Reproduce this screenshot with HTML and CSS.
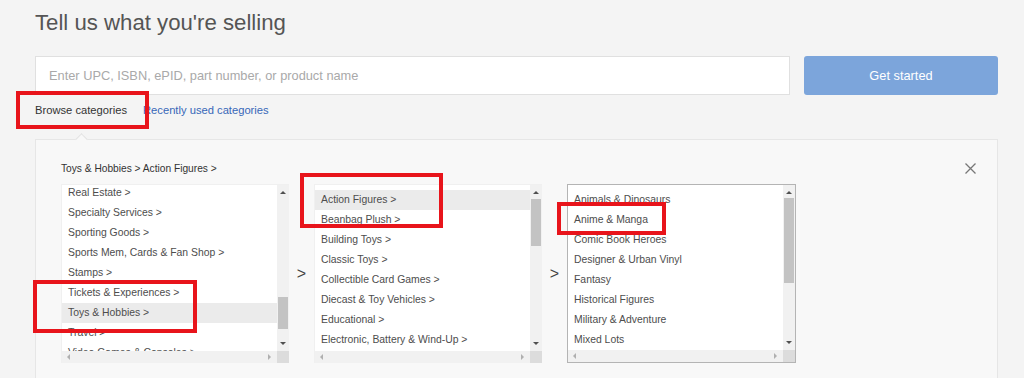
FILE: index.html
```html
<!DOCTYPE html>
<html lang="en">
<head>
    <meta charset="UTF-8">
    <title>Tell us what you're selling</title>
    <link rel="stylesheet" href="styles.css">
</head>
<body>
    <div class="page">
        <h1 class="title">Tell us what you're selling</h1>

        <div class="search">
            <input class="search-input" type="text" placeholder="Enter UPC, ISBN, ePID, part number, or product name">
            <button class="search-btn" type="button">Get started</button>
        </div>

        <div class="tabs">
            <span class="tab tab-active">Browse categories</span>
            <a class="tab tab-link" href="#">Recently used categories</a>
        </div>

        <div class="panel">
            <span class="notch"></span>
            <div class="panel-head">
                <span class="crumbs">Toys &amp; Hobbies &gt; Action Figures &gt;</span>
                <svg class="close" width="11" height="11" viewBox="0 0 11 11">
                    <path d="M0.5 0.5 L10.5 10.5 M10.5 0.5 L0.5 10.5" stroke="#777" stroke-width="1.3" fill="none"/>
                </svg>
            </div>

            <div class="columns">
                <div class="list">
                    <div class="view">
                        <ul class="rows rows-up">
                            <li>Real Estate &gt;</li>
                            <li>Specialty Services &gt;</li>
                            <li>Sporting Goods &gt;</li>
                            <li>Sports Mem, Cards &amp; Fan Shop &gt;</li>
                            <li>Stamps &gt;</li>
                            <li>Tickets &amp; Experiences &gt;</li>
                            <li class="picked">Toys &amp; Hobbies &gt;</li>
                            <li>Travel &gt;</li>
                            <li>Video Games &amp; Consoles &gt;</li>
                        </ul>
                    </div>
                    <div class="vbar">
                        <span class="arr arr-up"></span>
                        <span class="thumb" style="top: 112px; height: 32px;"></span>
                        <span class="arr arr-down"></span>
                    </div>
                    <div class="hbar">
                        <span class="arr arr-left"></span>
                        <span class="arr arr-right"></span>
                    </div>
                    <div class="corner"></div>
                </div>

                <div class="sep">&gt;</div>

                <div class="list">
                    <div class="view">
                        <ul class="rows">
                            <li class="picked">Action Figures &gt;</li>
                            <li>Beanbag Plush &gt;</li>
                            <li>Building Toys &gt;</li>
                            <li>Classic Toys &gt;</li>
                            <li>Collectible Card Games &gt;</li>
                            <li>Diecast &amp; Toy Vehicles &gt;</li>
                            <li>Educational &gt;</li>
                            <li>Electronic, Battery &amp; Wind-Up &gt;</li>
                        </ul>
                    </div>
                    <div class="vbar">
                        <span class="arr arr-up"></span>
                        <span class="thumb" style="top: 14px; height: 47px;"></span>
                        <span class="arr arr-down"></span>
                    </div>
                    <div class="hbar">
                        <span class="arr arr-left"></span>
                        <span class="arr arr-right"></span>
                    </div>
                    <div class="corner"></div>
                </div>

                <div class="sep">&gt;</div>

                <div class="list list-focus">
                    <div class="view">
                        <ul class="rows">
                            <li>Animals &amp; Dinosaurs</li>
                            <li>Anime &amp; Manga</li>
                            <li>Comic Book Heroes</li>
                            <li>Designer &amp; Urban Vinyl</li>
                            <li>Fantasy</li>
                            <li>Historical Figures</li>
                            <li>Military &amp; Adventure</li>
                            <li>Mixed Lots</li>
                        </ul>
                    </div>
                    <div class="vbar">
                        <span class="arr arr-up"></span>
                        <span class="thumb" style="top: 13px; height: 85px;"></span>
                        <span class="arr arr-down"></span>
                    </div>
                    <div class="hbar">
                        <span class="arr arr-left"></span>
                        <span class="arr arr-right"></span>
                    </div>
                    <div class="corner"></div>
                </div>
            </div>
        </div>
    </div>

    <!-- red annotation boxes drawn over the screenshot -->
    <div class="mark" style="left: 16px; top: 91px; width: 133px; height: 38px;"></div>
    <div class="mark" style="left: 33px; top: 280px; width: 164px; height: 53px;"></div>
    <div class="mark" style="left: 300px; top: 173px; width: 143px; height: 55px;"></div>
    <div class="mark" style="left: 557px; top: 202px; width: 109px; height: 33px;"></div>
</body>
</html>
```

FILE: styles.css
```css
body {
    font-family: "Liberation Sans", Arial, sans-serif;
    background-color: #f4f4f4;
    color: #333;
    margin: 0;
    padding: 0;
    overflow: hidden;
}

.page {
    padding-left: 35px;
    width: 963px;
}

.title {
    margin: 0;
    padding-top: 10px;
    font-size: 22.2px;
    line-height: 26px;
    font-weight: normal;
    color: #555;
}

.search {
    display: flex;
    gap: 14px;
    margin-top: 20px;
}

.search-input {
    width: 755px;
    height: 39px;
    box-sizing: border-box;
    border: 1px solid #e0e0e0;
    padding: 0 13px;
    font-family: inherit;
    font-size: 12.8px;
    background: #fff;
    outline: none;
}

.search-input::placeholder {
    color: #a9a9a9;
}

.search-btn {
    width: 194px;
    height: 39px;
    border: none;
    border-radius: 3px;
    background-color: #7ca5db;
    color: #fff;
    font-family: inherit;
    font-size: 12.8px;
}

.tabs {
    display: flex;
    gap: 16px;
    height: 44px;
    box-sizing: border-box;
    padding-top: 8px;
    font-size: 11.2px;
    line-height: 14px;
}

.tab-active {
    color: #333;
}

.tab-link {
    color: #3767b8;
    text-decoration: none;
}

.panel {
    position: relative;
    background-color: #f8f8f8;
    border: 1px solid #e6e6e6;
    padding: 21px 21px 40px 25px;
}

.notch {
    position: absolute;
    left: 41px;
    top: -5px;
    width: 8px;
    height: 8px;
    background: #f8f8f8;
    border-left: 1px solid #e2e2e2;
    border-top: 1px solid #e2e2e2;
    transform: rotate(45deg);
}

.panel-head {
    display: flex;
    justify-content: space-between;
    align-items: center;
    height: 14px;
    font-size: 10.2px;
    color: #333;
}

.columns {
    display: flex;
    margin-top: 9px;
}

.list {
    display: grid;
    grid-template-columns: 1fr 12px;
    grid-template-rows: 166px 12px;
    width: 228px;
    box-sizing: border-box;
    border: 1px solid #f0f0f0;
    border-right: none;
    border-bottom: none;
    background: #fff;
}

.list-focus {
    width: 229px;
    border: 1px solid #b4b4b4;
    grid-template-rows: 165px 12px;
}

.view {
    overflow: hidden;
}

.rows {
    list-style: none;
    margin: 0;
    padding: 5px 0 0;
    font-size: 10.4px;
    color: #4d4d4d;
}

.rows-up {
    padding-top: 0;
    margin-top: -2px;
}

.rows li {
    height: 20px;
    line-height: 20px;
    padding-left: 6px;
    white-space: nowrap;
}

.rows li.picked {
    background-color: #ebebeb;
}

.vbar,
.hbar {
    position: relative;
    background-color: #f1f1f1;
}

.corner {
    background-color: #dcdcdc;
}

.thumb {
    position: absolute;
    left: 1px;
    right: 1px;
    background-color: #c3c3c3;
}

.arr {
    position: absolute;
    width: 0;
    height: 0;
}

.arr-up {
    top: 6px;
    left: 3px;
    border-left: 3px solid transparent;
    border-right: 3px solid transparent;
    border-bottom: 3px solid #505050;
}

.arr-down {
    bottom: 6px;
    left: 3px;
    border-left: 3px solid transparent;
    border-right: 3px solid transparent;
    border-top: 3px solid #505050;
}

.arr-left {
    top: 3px;
    left: 5px;
    border-top: 3px solid transparent;
    border-bottom: 3px solid transparent;
    border-right: 3px solid #b0b0b0;
}

.arr-right {
    top: 3px;
    right: 6px;
    border-top: 3px solid transparent;
    border-bottom: 3px solid transparent;
    border-left: 3px solid #b0b0b0;
}

.sep {
    width: 25px;
    display: flex;
    align-items: center;
    justify-content: center;
    font-size: 16px;
    color: #444;
}

.mark {
    position: absolute;
    box-sizing: border-box;
    border: 4px solid #e8141b;
}
```
